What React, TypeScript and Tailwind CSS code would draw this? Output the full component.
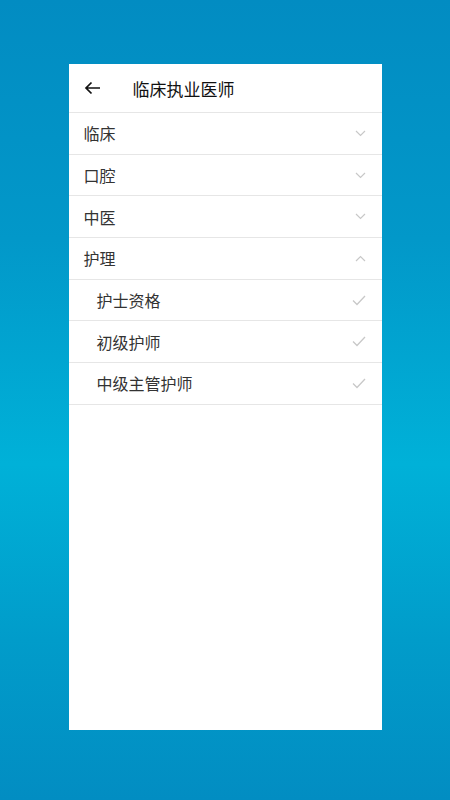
import React from 'react';

interface Item {
    label: string;
    sub?: boolean;
    icon: 'down' | 'up' | 'check';
}

const items: Item[] = [
    { label: '临床', icon: 'down' },
    { label: '口腔', icon: 'down' },
    { label: '中医', icon: 'down' },
    { label: '护理', icon: 'up' },
    { label: '护士资格', sub: true, icon: 'check' },
    { label: '初级护师', sub: true, icon: 'check' },
    { label: '中级主管护师', sub: true, icon: 'check' },
];

const RowIcon: React.FC<{ kind: Item['icon'] }> = ({ kind }) => {
    if (kind === 'check') {
        return (
            <svg width="14" height="11" viewBox="0 0 14 11" fill="none">
                <path d="M1 5.5 L5 9.5 L13 1" stroke="#c8c8c8" strokeWidth="1.3" />
            </svg>
        );
    }
    return (
        <svg width="11" height="7" viewBox="0 0 11 7" fill="none">
            <path
                d={kind === 'down' ? 'M1 1 L5.5 5.5 L10 1' : 'M1 6 L5.5 1.5 L10 6'}
                stroke="#c8c8c8"
                strokeWidth="1.2"
            />
        </svg>
    );
};

const App: React.FC = () => {
    return (
        <div
            className="w-[450px] h-[800px] flex justify-center pt-[64px] bg-[linear-gradient(180deg,#028cc2_0%,#0298c9_30%,#00b1d8_58%,#019cca_80%,#028dc2_100%)]"
            style={{ fontFamily: '"Noto Sans CJK SC", "Noto Sans", sans-serif' }}
        >
            <div className="w-[313px] h-[666px] bg-white flex flex-col">
                <div className="h-[49px] flex items-center border-b border-[#e6e6e6] shrink-0">
                    <div className="w-[64px] pl-[15px] flex items-center">
                        <svg width="17" height="14" viewBox="0 0 17 14" fill="none">
                            <path d="M16 7 H2 M7.5 1.5 L2 7 L7.5 12.5" stroke="#111" strokeWidth="1.7" />
                        </svg>
                    </div>
                    <span className="text-[17px] text-[#111] leading-none">临床执业医师</span>
                </div>
                {items.map(item => (
                    <div
                        key={item.label}
                        className={`h-[41.7px] shrink-0 flex items-center justify-between border-b border-[#e6e6e6] pr-[16px] ${item.sub ? 'pl-[28px]' : 'pl-[15px]'}`}
                    >
                        <span className="text-[16px] text-[#333] leading-none">{item.label}</span>
                        <RowIcon kind={item.icon} />
                    </div>
                ))}
            </div>
        </div>
    );
};

export default App;
